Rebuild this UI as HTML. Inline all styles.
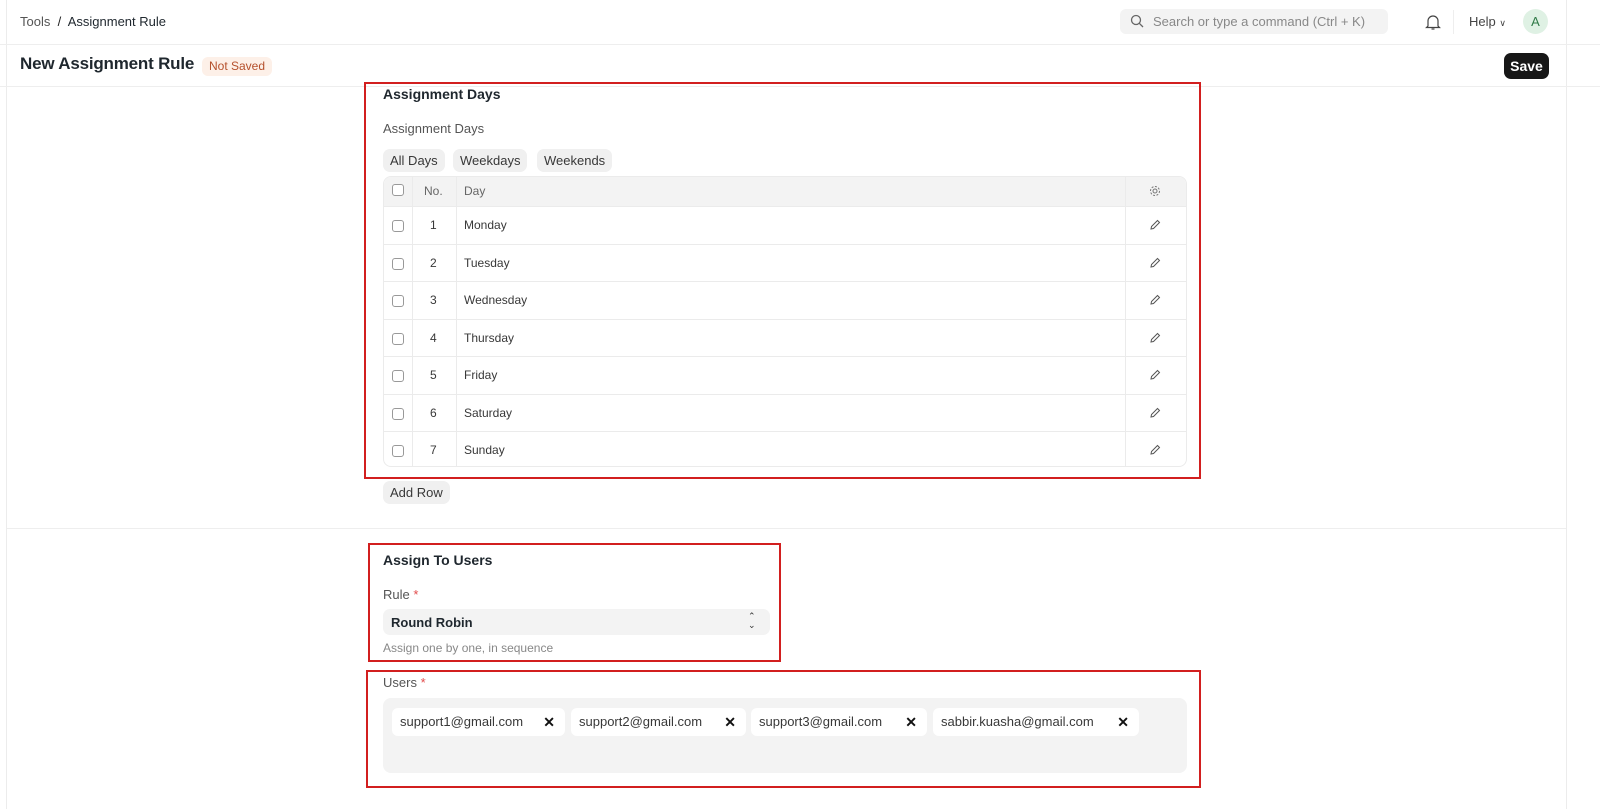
<!DOCTYPE html>
<html><head><style>
*{box-sizing:border-box;margin:0;padding:0}
body{width:1600px;height:809px;background:#fff;font-family:"Liberation Sans",sans-serif;color:#1f272e;position:relative;overflow:hidden}
.abs{position:absolute}
.t{font-size:13px}
.pill{position:absolute;background:#f0f0f0;border-radius:7px;font-size:13px;color:#383838;height:23px;line-height:23px;padding:0 7px}
.red{position:absolute;border:2px solid #d21f1f}
.row{position:absolute;left:383px;width:804px;height:37.5px;border-top:1px solid #ebebeb;font-size:12px;color:#383838}
.cb{position:absolute;left:9px;width:12px;height:12px;border:1px solid #999;border-radius:3px;background:#fff}
.vl{position:absolute;top:0;bottom:0;width:1px;background:#ebebeb}
.chip{position:absolute;top:708px;height:28px;background:#fff;border-radius:6px;font-size:13px;color:#383838;line-height:28px;padding-left:8px}
.chip b{position:absolute;right:10px;font-size:14px;color:#111}
</style></head><body>
<div class="abs" style="left:6px;top:0;width:1px;height:809px;background:#ececec"></div>
<div class="abs" style="left:1566px;top:0;width:1px;height:809px;background:#ececec"></div>
<div class="abs t" style="left:20px;top:14px;color:#555">Tools &nbsp;<span style="color:#222">/</span>&nbsp; <span style="color:#1f272e">Assignment Rule</span></div>
<div class="abs" style="left:1120px;top:9px;width:268px;height:25px;background:#f3f3f3;border-radius:6px"></div>
<svg class="abs" style="left:1130px;top:14px" width="14" height="14" viewBox="0 0 14 14"><circle cx="6" cy="6" r="4.5" fill="none" stroke="#666" stroke-width="1.3"/><path d="M9.3 9.3L13 13" stroke="#666" stroke-width="1.3"/></svg>
<div class="abs t" style="left:1153px;top:14px;color:#888">Search or type a command (Ctrl + K)</div>
<svg class="abs" style="left:1425px;top:13px" width="16" height="18" viewBox="0 0 16 18"><path d="M3 13V8a5 5 0 0 1 10 0v5l1.5 1.5h-13z" fill="none" stroke="#444" stroke-width="1.2"/><path d="M6.5 16h3" stroke="#444" stroke-width="1.2"/></svg>
<div class="abs" style="left:1453px;top:10px;width:1px;height:24px;background:#eee"></div>
<div class="abs t" style="left:1469px;top:14px;color:#444">Help <span style="font-size:9px">∨</span></div>
<div class="abs" style="left:1523px;top:9px;width:25px;height:25px;border-radius:50%;background:#dff1e4;color:#2f7a47;font-size:13px;text-align:center;line-height:25px">A</div>
<div class="abs" style="left:0;top:44px;width:1600px;height:1px;background:#eee"></div>
<div class="abs" style="left:20px;top:54px;font-size:17px;font-weight:bold;letter-spacing:-0.2px">New Assignment Rule</div>
<div class="abs" style="left:202px;top:57px;height:19px;padding:0 7px;border-radius:6px;background:#fdf0e8;color:#b5502c;font-size:12px;line-height:19px">Not Saved</div>
<div class="abs" style="left:1504px;top:53px;width:45px;height:26px;background:#171717;border-radius:7px;color:#fff;font-size:14px;font-weight:bold;text-align:center;line-height:26px">Save</div>
<div class="abs" style="left:0;top:86px;width:1600px;height:1px;background:#eee"></div>

<div class="abs" style="left:383px;top:86px;font-size:14px;font-weight:bold">Assignment Days</div>
<div class="abs t" style="left:383px;top:121px;color:#555">Assignment Days</div>
<div class="pill" style="left:383px;top:149px">All Days</div>
<div class="pill" style="left:453px;top:149px">Weekdays</div>
<div class="pill" style="left:537px;top:149px">Weekends</div>

<div class="abs" style="left:383px;top:176px;width:804px;height:291px;border:1px solid #ebebeb;border-radius:8px;overflow:hidden">
<div class="abs" style="left:0;top:0;width:804px;height:30px;background:#f3f3f3"></div>
</div>
<div class="row" style="top:176px;border-top:none;height:30px">
<div class="cb" style="top:8px"></div>
<div class="abs" style="left:41px;top:8px;color:#666">No.</div>
<div class="abs" style="left:81px;top:8px;color:#666">Day</div>
<svg class="abs" style="left:766px;top:9px" width="12" height="12" viewBox="0 0 12 12"><circle cx="6" cy="6" r="2" fill="none" stroke="#777"/><circle cx="6" cy="6" r="4.5" fill="none" stroke="#777" stroke-dasharray="2 1.5"/></svg>
</div>
<div class="vl" style="left:412px;top:176px;height:291px"></div>
<div class="vl" style="left:456px;top:176px;height:291px"></div>
<div class="vl" style="left:1125px;top:176px;height:291px"></div>

<div class="row" style="top:206px"><div class="cb" style="top:13px"></div><div class="abs" style="left:47px;top:11px">1</div><div class="abs" style="left:81px;top:11px">Monday</div><svg class="abs" style="left:766px;top:12px" width="12" height="12" viewBox="0 0 12 12"><path d="M2 10l.5-2.5L8.5 1.5l2 2-6 6z" fill="none" stroke="#555"/></svg></div>
<div class="row" style="top:243.5px"><div class="cb" style="top:13px"></div><div class="abs" style="left:47px;top:11px">2</div><div class="abs" style="left:81px;top:11px">Tuesday</div><svg class="abs" style="left:766px;top:12px" width="12" height="12" viewBox="0 0 12 12"><path d="M2 10l.5-2.5L8.5 1.5l2 2-6 6z" fill="none" stroke="#555"/></svg></div>
<div class="row" style="top:281px"><div class="cb" style="top:13px"></div><div class="abs" style="left:47px;top:11px">3</div><div class="abs" style="left:81px;top:11px">Wednesday</div><svg class="abs" style="left:766px;top:12px" width="12" height="12" viewBox="0 0 12 12"><path d="M2 10l.5-2.5L8.5 1.5l2 2-6 6z" fill="none" stroke="#555"/></svg></div>
<div class="row" style="top:318.5px"><div class="cb" style="top:13px"></div><div class="abs" style="left:47px;top:11px">4</div><div class="abs" style="left:81px;top:11px">Thursday</div><svg class="abs" style="left:766px;top:12px" width="12" height="12" viewBox="0 0 12 12"><path d="M2 10l.5-2.5L8.5 1.5l2 2-6 6z" fill="none" stroke="#555"/></svg></div>
<div class="row" style="top:356px"><div class="cb" style="top:13px"></div><div class="abs" style="left:47px;top:11px">5</div><div class="abs" style="left:81px;top:11px">Friday</div><svg class="abs" style="left:766px;top:12px" width="12" height="12" viewBox="0 0 12 12"><path d="M2 10l.5-2.5L8.5 1.5l2 2-6 6z" fill="none" stroke="#555"/></svg></div>
<div class="row" style="top:393.5px"><div class="cb" style="top:13px"></div><div class="abs" style="left:47px;top:11px">6</div><div class="abs" style="left:81px;top:11px">Saturday</div><svg class="abs" style="left:766px;top:12px" width="12" height="12" viewBox="0 0 12 12"><path d="M2 10l.5-2.5L8.5 1.5l2 2-6 6z" fill="none" stroke="#555"/></svg></div>
<div class="row" style="top:431px"><div class="cb" style="top:13px"></div><div class="abs" style="left:47px;top:11px">7</div><div class="abs" style="left:81px;top:11px">Sunday</div><svg class="abs" style="left:766px;top:12px" width="12" height="12" viewBox="0 0 12 12"><path d="M2 10l.5-2.5L8.5 1.5l2 2-6 6z" fill="none" stroke="#555"/></svg></div>

<div class="pill" style="left:383px;top:481px">Add Row</div>
<div class="abs" style="left:7px;top:528px;width:1559px;height:1px;background:#eee"></div>

<div class="abs" style="left:383px;top:552px;font-size:14px;font-weight:bold">Assign To Users</div>
<div class="abs t" style="left:383px;top:587px;color:#555">Rule <span style="color:#e24c4c">*</span></div>
<div class="abs" style="left:383px;top:609px;width:387px;height:26px;background:#f3f3f3;border-radius:7px"></div>
<div class="abs t" style="left:391px;top:615px;font-weight:bold">Round Robin</div>
<div class="abs" style="left:748px;top:612px;font-size:9px;line-height:9px;color:#333">⌃<br>⌄</div>
<div class="abs" style="left:383px;top:641px;font-size:12px;color:#888">Assign one by one, in sequence</div>

<div class="abs t" style="left:383px;top:675px;color:#555">Users <span style="color:#e24c4c">*</span></div>
<div class="abs" style="left:383px;top:698px;width:804px;height:75px;background:#f3f3f3;border-radius:8px"></div>
<div class="chip" style="left:392px;width:173px">support1@gmail.com<b>✕</b></div>
<div class="chip" style="left:571px;width:175px">support2@gmail.com<b>✕</b></div>
<div class="chip" style="left:751px;width:176px">support3@gmail.com<b>✕</b></div>
<div class="chip" style="left:933px;width:206px">sabbir.kuasha@gmail.com<b>✕</b></div>

<div class="red" style="left:364px;top:82px;width:837px;height:397px"></div>
<div class="red" style="left:368px;top:543px;width:413px;height:119px"></div>
<div class="red" style="left:366px;top:670px;width:835px;height:118px"></div>
</body></html>
